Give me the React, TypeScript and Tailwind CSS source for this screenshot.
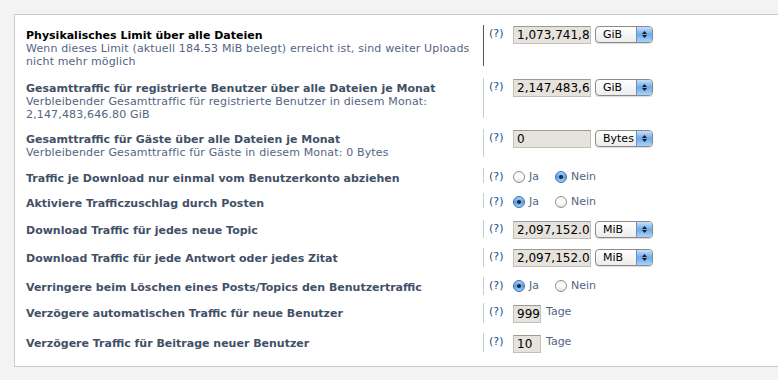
import React from 'react';

type Field =
  | { kind: 'unit'; value: string; unit: string }
  | { kind: 'radio'; yes: boolean }
  | { kind: 'days'; value: string };

type Row = {
  title: string;
  desc?: string[];
  gap: string;
  h: string;
  active?: boolean;
  field: Field;
};

const rows: Row[] = [
  {
    title: 'Physikalisches Limit über alle Dateien',
    desc: [
      'Wenn dieses Limit (aktuell 184.53 MiB belegt) erreicht ist, sind weiter Uploads',
      'nicht mehr möglich',
    ],
    gap: 'mt-[10px]',
    h: 'h-[41px]',
    active: true,
    field: { kind: 'unit', value: '1,073,741,824', unit: 'GiB' },
  },
  {
    title: 'Gesamttraffic für registrierte Benutzer über alle Dateien je Monat',
    desc: [
      'Verbleibender Gesamttraffic für registrierte Benutzer in diesem Monat:',
      '2,147,483,646.80 GiB',
    ],
    gap: 'mt-[12px]',
    h: 'h-[40px]',
    field: { kind: 'unit', value: '2,147,483,647', unit: 'GiB' },
  },
  {
    title: 'Gesamttraffic für Gäste über alle Dateien je Monat',
    desc: ['Verbleibender Gesamttraffic für Gäste in diesem Monat: 0 Bytes'],
    gap: 'mt-[11px]',
    h: 'h-[28px]',
    field: { kind: 'unit', value: '0', unit: 'Bytes' },
  },
  {
    title: 'Traffic je Download nur einmal vom Benutzerkonto abziehen',
    gap: 'mt-[11px]',
    h: 'h-[15px]',
    field: { kind: 'radio', yes: false },
  },
  {
    title: 'Aktiviere Trafficzuschlag durch Posten',
    gap: 'mt-[10px]',
    h: 'h-[15px]',
    field: { kind: 'radio', yes: true },
  },
  {
    title: 'Download Traffic für jedes neue Topic',
    gap: 'mt-[12px]',
    h: 'h-[18px]',
    field: { kind: 'unit', value: '2,097,152.00', unit: 'MiB' },
  },
  {
    title: 'Download Traffic für jede Antwort oder jedes Zitat',
    gap: 'mt-[10px]',
    h: 'h-[19px]',
    field: { kind: 'unit', value: '2,097,152.00', unit: 'MiB' },
  },
  {
    title: 'Verringere beim Löschen eines Posts/Topics den Benutzertraffic',
    gap: 'mt-[10px]',
    h: 'h-[18px]',
    field: { kind: 'radio', yes: true },
  },
  {
    title: 'Verzögere automatischen Traffic für neue Benutzer',
    gap: 'mt-[8px]',
    h: 'h-[20px]',
    field: { kind: 'days', value: '999' },
  },
  {
    title: 'Verzögere Traffic für Beitrage neuer Benutzer',
    gap: 'mt-[10px]',
    h: 'h-[19px]',
    field: { kind: 'days', value: '10' },
  },
];

// mac style radio button
const Radio = ({ on }: { on: boolean }) =>
  on ? (
    <span className="w-[12px] h-[12px] rounded-full border border-[#3a6fb0] bg-gradient-to-b from-[#a9d2f7] via-[#5a9fe3] to-[#9fd0fb] flex items-center justify-center shrink-0">
      <span className="w-[4px] h-[4px] rounded-full bg-[#1b2a3f]" />
    </span>
  ) : (
    <span className="w-[12px] h-[12px] rounded-full border border-[#8f8f8f] bg-gradient-to-b from-[#f4f4f4] via-[#ffffff] to-[#e2e2e2] shrink-0" />
  );

const Select = ({ unit }: { unit: string }) => (
  <div className="ml-[4px] w-[58px] h-[17px] rounded-[4px] border border-[#8a8a8a] bg-gradient-to-b from-[#ffffff] to-[#ececec] flex overflow-hidden shadow-[0_1px_1px_rgba(0,0,0,0.15)]">
    <span className="flex-1 pl-[7px] text-[11px] leading-[15px] text-black font-medium">{unit}</span>
    <span className="w-[16px] h-full border-l border-[#6d8fc0] bg-gradient-to-b from-[#c5e0fa] via-[#6ea9ea] to-[#a8d3fb] flex flex-col items-center justify-center gap-[1px]">
      <svg width="5" height="3" viewBox="0 0 5 3"><path d="M0 3 L2.5 0 L5 3 Z" fill="#1c1c1c" /></svg>
      <svg width="5" height="3" viewBox="0 0 5 3"><path d="M0 0 L2.5 3 L5 0 Z" fill="#1c1c1c" /></svg>
    </span>
  </div>
);

const TextBox = ({ value, w }: { value: string; w: string }) => (
  <div className={`${w} h-[18px] bg-[#e6e2dc] border border-[#c3c0ba] border-t-[#9c9a96] pl-[3px] text-[12px] leading-[17px] text-black overflow-hidden whitespace-nowrap`}>
    {value}
  </div>
);

const FieldView = ({ field }: { field: Field }) => {
  if (field.kind === 'unit')
    return (
      <div className="flex items-start pt-[1px]">
        <TextBox value={field.value} w="w-[78px]" />
        <Select unit={field.unit} />
      </div>
    );
  if (field.kind === 'days')
    return (
      <div className="flex items-start pt-[2px]">
        <TextBox value={field.value} w="w-[28px]" />
        <span className="ml-[5px] text-[11px] leading-[14px] text-[#536482]">Tage</span>
      </div>
    );
  return (
    <div className="flex items-center pt-[3px]">
      <Radio on={field.yes} />
      <span className="ml-[4px] w-[26px] text-[11px] leading-[12px] text-[#536482]">Ja</span>
      <Radio on={!field.yes} />
      <span className="ml-[4px] text-[11px] leading-[12px] text-[#536482]">Nein</span>
    </div>
  );
};

export default function App() {
  return (
    <div
      className="w-[778px] h-[380px] overflow-hidden bg-[#f3f3f3] pt-[14px]"
      style={{ fontFamily: '"Lucida Grande", "DejaVu Sans", Verdana, sans-serif' }}
    >
      <div className="ml-[14px] w-[800px] h-[353px] bg-white border border-[#cccccc] flex flex-col">
        {rows.map((r, i) => (
          <div key={i} className={`flex items-stretch shrink-0 ${r.gap} ${r.h}`}>
            <div className="w-[468px] pl-[11px] pt-[4px] text-[11px] leading-[13px]">
              <div className={`font-bold ${r.active ? 'text-black' : 'text-[#425067]'}`}>{r.title}</div>
              {r.desc?.map((d, j) => (
                <div key={j} className="text-[#536482] tracking-[0.15px]">{d}</div>
              ))}
            </div>
            <div className={`border-l ${r.active ? 'border-[#555555]' : 'border-[#cccccc]'} pl-[5px] flex items-start`}>
              <span className="w-[24px] pt-[2px] text-[11px] leading-[13px] text-[#105289]">(?)</span>
              <FieldView field={r.field} />
            </div>
          </div>
        ))}
      </div>
    </div>
  );
}
